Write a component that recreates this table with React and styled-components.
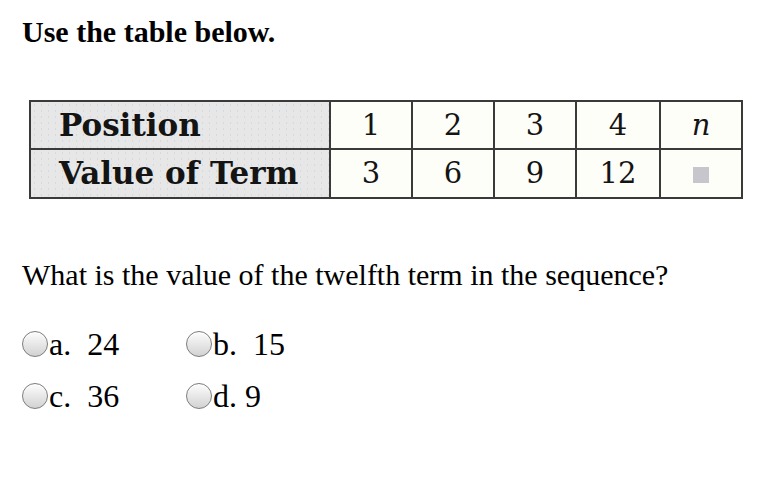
import React from "react";
import styled, { createGlobalStyle } from "styled-components";

const Global = createGlobalStyle`
  html, body { margin: 0; padding: 0; background: #ffffff; }
  body { font-family: "Liberation Serif", "Times New Roman", serif; color: #000; }
`;

const Page = styled.div`
  padding: 15px 0 0 22px;
  width: 770px;
  height: 483px;
  box-sizing: border-box;
  overflow: hidden;
`;

const Title = styled.h1`
  margin: 0;
  font-size: 30px;
  font-weight: bold;
  line-height: 34px;
`;

const TableWrap = styled.div`
  margin: 51px 0 0 7px;
`;

const Table = styled.table`
  border-collapse: collapse;
  font-family: "DejaVu Serif", serif;
  color: #141414;
  table-layout: fixed;
`;

const Row = styled.tr`
  height: ${(p) => p.$h}px;
`;

const HeadCell = styled.th`
  width: 270px;
  border: 2px solid #3a3a3a;
  background: #e7e7e7;
  background-image: radial-gradient(#d3dbe2 0.8px, transparent 1px);
  background-size: 7px 6px;
  text-align: left;
  padding: 0 0 0 28px;
  font-size: 31px;
  font-weight: bold;
  line-height: 1;
`;

const Cell = styled.td`
  width: ${(p) => p.$w}px;
  border: 2px solid #3a3a3a;
  background: #fefef8;
  text-align: center;
  padding: 0;
  font-size: 29px;
  line-height: 1;
  font-style: ${(p) => (p.$italic ? "italic" : "normal")};
`;

const Blank = styled.span`
  display: inline-block;
  width: 16px;
  height: 16px;
  background: #c6c6cc;
  vertical-align: middle;
`;

const Question = styled.p`
  margin: 59px 0 0 0;
  font-size: 30px;
  line-height: 34px;
`;

const Options = styled.div`
  display: grid;
  grid-template-columns: 164px auto;
  row-gap: 18px;
  margin-top: 35px;
`;

const Option = styled.label`
  display: flex;
  align-items: center;
  font-family: "Liberation Serif", "Times New Roman", serif;
  font-size: 32px;
  line-height: 34px;
  white-space: pre;
`;

const Radio = styled.input.attrs({ type: "radio" })`
  appearance: none;
  margin: 0 1px 0 0;
  width: 26px;
  height: 26px;
  border-radius: 50%;
  border: 1.5px solid #7c7c7c;
  background: linear-gradient(#fdfdfd, #d2d2d2);
  box-shadow: inset 0 1px 1px rgba(255, 255, 255, 0.9);
  box-sizing: border-box;
  flex: none;
`;

const cols = [
  { pos: "1", val: "3", w: 80 },
  { pos: "2", val: "6", w: 80 },
  { pos: "3", val: "9", w: 80 },
  { pos: "4", val: "12", w: 82 },
];

const answers = ["a.  24", "b.  15", "c.  36", "d. 9"];

export default function App() {
  return (
    <>
      <Global />
      <Page>
        <Title>Use the table below.</Title>
        <TableWrap>
          <Table>
            <tbody>
              <Row $h={48}>
                <HeadCell>Position</HeadCell>
                {cols.map((c) => (
                  <Cell key={c.pos} $w={c.w}>{c.pos}</Cell>
                ))}
                <Cell $w={80} $italic>n</Cell>
              </Row>
              <Row $h={49}>
                <HeadCell>Value of Term</HeadCell>
                {cols.map((c) => (
                  <Cell key={c.pos} $w={c.w}>{c.val}</Cell>
                ))}
                <Cell $w={80}><Blank /></Cell>
              </Row>
            </tbody>
          </Table>
        </TableWrap>
        <Question>What is the value of the twelfth term in the sequence?</Question>
        <Options>
          {answers.map((a) => (
            <Option key={a}><Radio name="q" />{a}</Option>
          ))}
        </Options>
      </Page>
    </>
  );
}
